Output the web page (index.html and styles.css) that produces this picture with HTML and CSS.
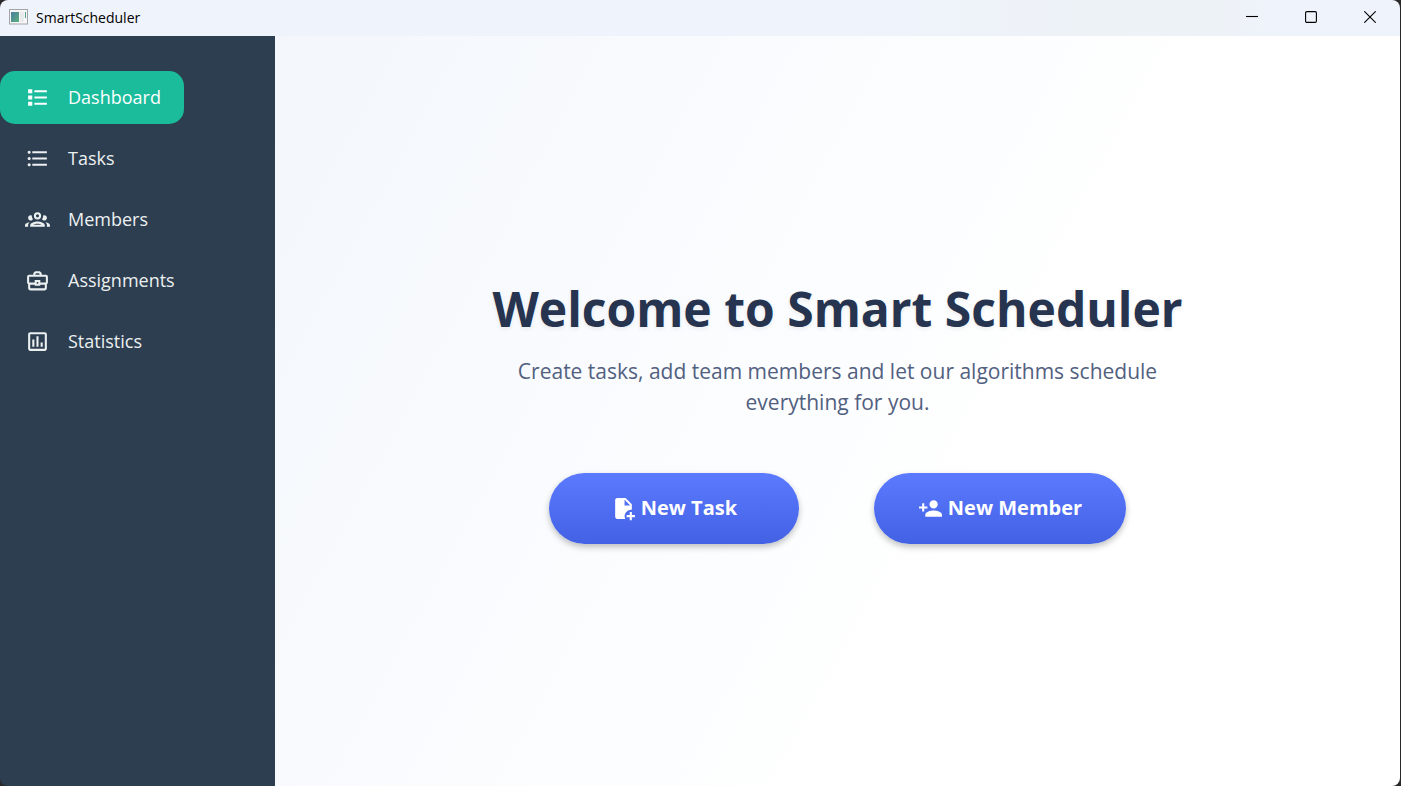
FILE: index.html
```html
<!DOCTYPE html>
<html lang="en">
<head>
<meta charset="utf-8">
<meta name="viewport" content="width=device-width, initial-scale=1">
<title>SmartScheduler</title>
<link rel="stylesheet" href="styles.css">
</head>
<body>
<div class="window">
  <header class="titlebar">
    <svg class="app-icon" viewBox="0 0 19 16" aria-hidden="true">
      <defs>
        <linearGradient id="pane" x1="0" y1="0" x2="1" y2="1"><stop offset="0" stop-color="#4a7f9f"/><stop offset="1" stop-color="#5cae7c"/></linearGradient>
      </defs>
      <rect x=".5" y=".5" width="18" height="14.5" fill="#f6f6f6" stroke="#a2a5aa"/>
      <rect x="2" y="3" width="8" height="10" fill="url(#pane)"/>
      <rect x="11" y="3" width="4" height="10" fill="#e8eaeb"/>
      <rect x="16" y="3" width="1" height="6" fill="#56a08a"/>
    </svg>
    <span class="app-name">SmartScheduler</span>
    <div class="window-controls">
      <button class="window-button" type="button" aria-label="Minimize"><svg viewBox="0 0 12 12"><path d="M0 5.5H12"/></svg></button>
      <button class="window-button" type="button" aria-label="Maximize"><svg viewBox="0 0 12 12"><rect x=".6" y=".6" width="10.8" height="10.8" rx="1.2"/></svg></button>
      <button class="window-button" type="button" aria-label="Close"><svg viewBox="0 0 12 12"><path d="M.3 .3L11.7 11.7M11.7 .3L.3 11.7"/></svg></button>
    </div>
  </header>
  <div class="workspace">
    <nav class="sidebar" aria-label="Main">
      <a class="nav-link active" href="#dashboard" aria-current="page">
        <svg class="icon" viewBox="0 0 24 24" aria-hidden="true"><path d="M3,4H7V8H3V4M9,5V7H21V5H9M3,10H7V14H3V10M9,11V13H21V11H9M3,16H7V20H3V16M9,17V19H21V17H9"/></svg>
        <span class="label">Dashboard</span>
      </a>
      <a class="nav-link" href="#tasks">
        <svg class="icon" viewBox="0 0 24 24" aria-hidden="true"><path d="M7,5H21V7H7V5M7,13V11H21V13H7M4,4.5A1.5,1.5 0 0,1 5.5,6A1.5,1.5 0 0,1 4,7.5A1.5,1.5 0 0,1 2.5,6A1.5,1.5 0 0,1 4,4.5M4,10.5A1.5,1.5 0 0,1 5.5,12A1.5,1.5 0 0,1 4,13.5A1.5,1.5 0 0,1 2.5,12A1.5,1.5 0 0,1 4,10.5M7,19V17H21V19H7M4,16.5A1.5,1.5 0 0,1 5.5,18A1.5,1.5 0 0,1 4,19.5A1.5,1.5 0 0,1 2.5,18A1.5,1.5 0 0,1 4,16.5Z"/></svg>
        <span class="label">Tasks</span>
      </a>
      <a class="nav-link" href="#members">
        <svg class="icon" viewBox="0 0 24 24" aria-hidden="true"><path d="M12,5A3.5,3.5 0 0,0 8.5,8.5A3.5,3.5 0 0,0 12,12A3.5,3.5 0 0,0 15.5,8.5A3.5,3.5 0 0,0 12,5M12,7A1.5,1.5 0 0,1 13.5,8.5A1.5,1.5 0 0,1 12,10A1.5,1.5 0 0,1 10.5,8.5A1.5,1.5 0 0,1 12,7M5.5,8A2.5,2.5 0 0,0 3,10.5C3,11.44 3.53,12.25 4.29,12.68C4.65,12.88 5.06,13 5.5,13C5.94,13 6.35,12.88 6.71,12.68C7.08,12.47 7.39,12.17 7.62,11.81C6.89,10.86 6.5,9.7 6.5,8.5C6.5,8.41 6.5,8.31 6.5,8.22C6.2,8.08 5.86,8 5.5,8M18.5,8C18.14,8 17.8,8.08 17.5,8.22C17.5,8.31 17.5,8.41 17.5,8.5C17.5,9.7 17.11,10.86 16.38,11.81C16.5,12 16.63,12.15 16.78,12.3C16.94,12.45 17.1,12.58 17.29,12.68C17.65,12.88 18.06,13 18.5,13C18.94,13 19.35,12.88 19.71,12.68C20.47,12.25 21,11.44 21,10.5A2.5,2.5 0 0,0 18.5,8M12,14C9.66,14 5,15.17 5,17.5V19H19V17.5C19,15.17 14.34,14 12,14M4.71,14.55C2.78,14.78 0,15.76 0,17.5V19H3V17.07C3,16.06 3.69,15.22 4.71,14.55M19.29,14.55C20.31,15.22 21,16.06 21,17.07V19H24V17.5C24,15.76 21.22,14.78 19.29,14.55M12,16C13.53,16 15.24,16.5 16.23,17H7.77C8.76,16.5 10.47,16 12,16Z"/></svg>
        <span class="label">Members</span>
      </a>
      <a class="nav-link" href="#assignments">
        <svg class="icon icon-line" viewBox="0 0 24 24" aria-hidden="true"><path d="M9 7V5.2L10.2 4H13.8L15 5.2V7M10 15H4.5Q3 15 3 13.5V8.5Q3 7.5 4 7.5H20Q21 7.5 21 8.5V13.5Q21 15 19.5 15H14M4 15V19Q4 20.5 5.5 20.5H18.5Q20 20.5 20 19V15M10.3 12.5H13.7V16H10.3Z"/></svg>
        <span class="label">Assignments</span>
      </a>
      <a class="nav-link" href="#statistics">
        <svg class="icon" viewBox="0 0 24 24" aria-hidden="true"><path d="M9 17H7V10H9V17M13 17H11V7H13V17M17 17H15V13H17V17M19 19H5V5H19V19.1M19 3H5C3.9 3 3 3.9 3 5V19C3 20.1 3.9 21 5 21H19C20.1 21 21 20.1 21 19V5C21 3.9 20.1 3 19 3Z"/></svg>
        <span class="label">Statistics</span>
      </a>
    </nav>
    <main class="welcome">
      <h1 class="welcome-title">Welcome to Smart Scheduler</h1>
      <p class="welcome-text">Create tasks, add team members and let our algorithms schedule everything for you.</p>
      <div class="actions">
        <button class="action" type="button">
          <svg class="icon" viewBox="0 0 24 24" aria-hidden="true"><path fill-rule="evenodd" d="M6 2H14L20 8V13.3A6 6 0 0 0 13.8 22H6C4.9 22 4 21.1 4 20V4C4 2.9 4.9 2 6 2ZM13 3.5V9H18.5ZM18 15.3H20V18.3H23V20.3H20V23.3H18V20.3H15V18.3H18Z"/></svg>
          <span class="label">New Task</span>
        </button>
        <button class="action" type="button">
          <svg class="icon" viewBox="0 0 24 24" aria-hidden="true"><path d="M15,14C12.33,14 7,15.33 7,18V20H23V18C23,15.33 17.67,14 15,14M6,10V7H4V10H1V12H4V15H6V12H9V10M15,12A4,4 0 0,0 19,8A4,4 0 0,0 15,4A4,4 0 0,0 11,8A4,4 0 0,0 15,12Z"/></svg>
          <span class="label">New Member</span>
        </button>
      </div>
    </main>
  </div>
</div>
</body>
</html>
```
FILE: styles.css
```css
* {
  box-sizing: border-box;
}

body {
  margin: 0;
  background: #29292c;
  font-family: "Open Sans", "Noto Sans", sans-serif;
}

button {
  font: inherit;
  border: 0;
  cursor: pointer;
}

.window {
  display: flex;
  flex-direction: column;
  min-height: 100vh;
  margin-right: 1px;
  border-radius: 8px;
  overflow: hidden;
}

.titlebar {
  display: flex;
  align-items: center;
  height: 36px;
  padding: 0 1px 2px 9px;
  background: linear-gradient(90deg, #eff3fb 0%, #eff3fb 60%, #edf2f6 85%, #eff3fb 92%);
}

.app-icon {
  width: 19px;
  height: 16px;
  margin-right: 8px;
}

.app-name {
  font-size: 14px;
  color: #000;
}

.window-controls {
  display: flex;
  align-self: stretch;
  margin-left: auto;
}

.window-button {
  display: flex;
  align-items: center;
  justify-content: center;
  width: 59px;
  padding: 0;
  background: transparent;
}

.window-button svg {
  width: 12px;
  height: 12px;
  fill: none;
  stroke: #000;
  stroke-width: 1.1;
}

.workspace {
  display: flex;
  flex: 1;
}

.sidebar {
  display: flex;
  flex-direction: column;
  align-items: flex-start;
  gap: 8px;
  width: 275px;
  padding-top: 35px;
  background: #2d3e50;
}

.nav-link {
  display: flex;
  align-items: center;
  gap: 18px;
  height: 53px;
  padding: 0 23px 0 25px;
  border-radius: 15px;
  font-size: 18px;
  color: #ecf0f1;
  text-decoration: none;
}

.nav-link.active {
  background: #1abc9c;
  color: #fff;
}

.label {
  padding-bottom: 2px;
}

.icon {
  width: 25px;
  height: 25px;
  fill: currentColor;
}

.icon-line {
  fill: none;
  stroke: currentColor;
  stroke-width: 2;
}

.welcome {
  display: flex;
  flex: 1;
  flex-direction: column;
  align-items: center;
  justify-content: center;
  background: linear-gradient(118deg, #f3f7fc 0%, #fff 64%);
}

.welcome-title {
  margin: 0 0 16px;
  font-size: 48px;
  line-height: 62px;
  font-weight: 700;
  color: #26344f;
  text-shadow: 0 2px 4px rgba(38, 52, 79, 0.08);
}

.welcome-text {
  max-width: 700px;
  margin: 0 0 55px;
  font-size: 21px;
  line-height: 31px;
  text-align: center;
  color: #526080;
}

.actions {
  display: flex;
  gap: 75px;
}

.action {
  display: flex;
  align-items: center;
  justify-content: center;
  gap: 5px;
  min-width: 250px;
  height: 71px;
  padding: 0 44px;
  border-radius: 36px;
  background: linear-gradient(#5b7aff, #4361e3);
  box-shadow: 0 3px 6px rgba(0, 0, 0, 0.25);
  font-size: 20px;
  font-weight: 700;
  color: #fff;
}
```
